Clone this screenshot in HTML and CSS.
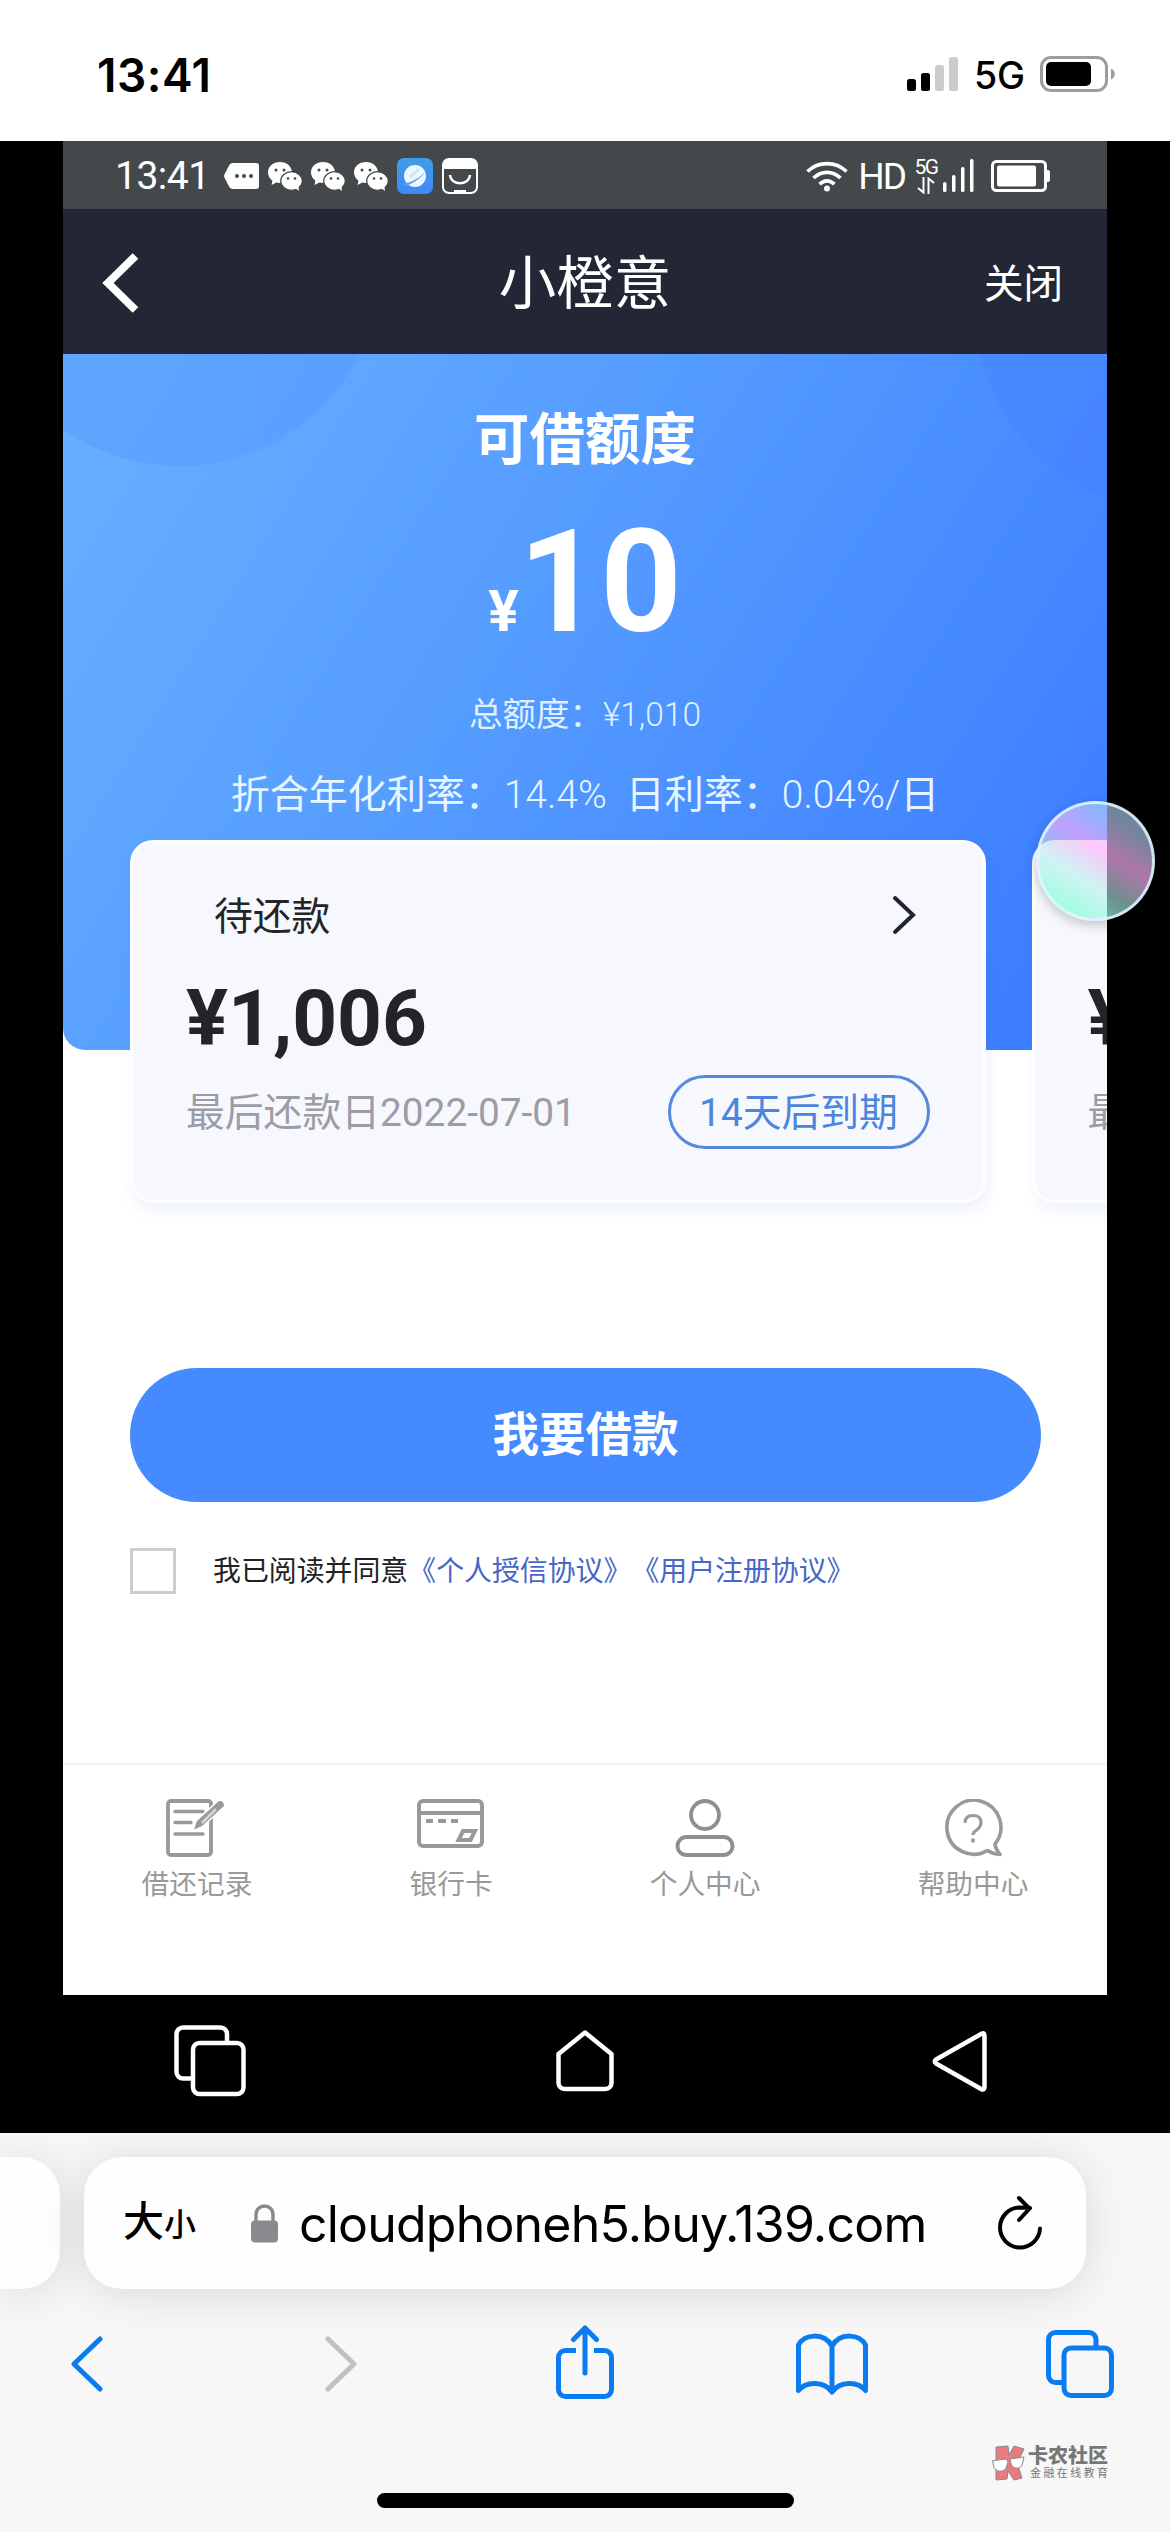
FILE: index.html
```html
<!DOCTYPE html>
<html lang="zh-CN">
<head>
<meta charset="utf-8">
<title>小橙意</title>
<link rel="stylesheet" href="styles.css">
</head>
<body>
<svg width="0" height="0" class="defs">
  <symbol id="wechat" viewBox="0 0 34 29">
    <path d="M12 0C5 0 0 4.600 0 10.500c0 3.300 1.700 6.100 4.400 8L3.600 23l4.700-2.500c1.200.3 2.400.5 3.700.5 6.800 0 12-4.700 12-10.500S19 0 12 0z" fill="#fff"/>
    <ellipse cx="23.500" cy="19" rx="10.800" ry="9.300" fill="#fff" stroke="#43484b" stroke-width="1.200"/>
    <path d="M27 26l4 3-.6-5z" fill="#fff"/>
    <g fill="#43484b"><circle cx="8" cy="8" r="1.500"/><circle cx="16" cy="8" r="1.500"/><circle cx="20" cy="16.500" r="1.300"/><circle cx="27" cy="16.500" r="1.300"/></g>
  </symbol>
</svg>

<header class="ios-status">
  <span class="ios-time">13:41</span>
  <div class="ios-right">
    <svg width="52" height="35" viewBox="0 0 52 35">
      <rect x="0" y="22" width="9" height="12" rx="2.500"/><rect x="14" y="16" width="9" height="18" rx="2.500"/>
      <g fill="#cbcbcb"><rect x="28" y="8" width="9" height="26" rx="2.500"/><rect x="42" y="0" width="9" height="34" rx="2.500"/></g>
    </svg>
    <span class="ios-net">5G</span>
    <svg width="76" height="36" viewBox="0 0 76 36">
      <rect x="1.500" y="1.500" width="65" height="33" rx="9.500" fill="none" stroke="#9d9d9d" stroke-width="3"/>
      <rect x="6" y="6" width="45" height="24" rx="5"/>
      <path d="M71 12.500c5 2 5 9 0 11z" fill="#9d9d9d"/>
    </svg>
  </div>
</header>

<main class="stage">
  <section class="screen">
    <div class="droid-status">
      <span class="droid-time">13:41</span>
      <div class="notices">
        <svg width="35" height="28" viewBox="0 0 35 28"><path d="M9 1h23a3 3 0 0 1 3 3v20a3 3 0 0 1-3 3H9c-2 0-3-1-4-2.500L.7 16a4 4 0 0 1 0-4L5 3.500C6 2 7 1 9 1z" fill="#fff"/><g fill="#43484b"><circle cx="13" cy="14" r="2"/><circle cx="20" cy="14" r="2"/><circle cx="27" cy="14" r="2"/></g></svg>
        <svg width="34" height="29"><use href="#wechat"/></svg>
        <svg width="34" height="29"><use href="#wechat"/></svg>
        <svg width="34" height="29"><use href="#wechat"/></svg>
        <svg width="36" height="36" viewBox="0 0 36 36"><defs><linearGradient id="app" x2="0" y2="1"><stop stop-color="#3f9de6"/><stop offset="1" stop-color="#4187fb"/></linearGradient></defs><rect width="36" height="36" rx="7" fill="url(#app)"/><circle cx="18" cy="18" r="11" fill="#eef7ff"/><path d="M7 28c5 0 17-7 22-15-5 6-15 12-21 12z" fill="#5aa2f2"/><path d="M13 19l9-8" stroke="#c9e4ff" stroke-width="3"/></svg>
        <svg width="36" height="36" viewBox="0 0 36 36"><rect x="1" y="1" width="34" height="34" rx="6" fill="none" stroke="#fff" stroke-width="2"/><path d="M1 11V7a6 6 0 0 1 6-6h22a6 6 0 0 1 6 6v4z" fill="#fff"/><path d="M8 17c1 11 19 11 20 0" fill="none" stroke="#fff" stroke-width="2.500"/><path d="M12 33.500h12" stroke="#fff" stroke-width="3"/></svg>
      </div>
      <div class="droid-right">
        <svg width="42" height="31" viewBox="0 0 42 31" fill="none" stroke="#fff" stroke-width="3.600"><path d="M1.500 10.500c11-10.500 28-10.500 39 0M7.500 17c8-7.500 19-7.500 27 0M13.500 23.200c5-4.500 10-4.500 15 0"/><circle cx="21" cy="27.500" r="3" fill="#fff" stroke="none"/></svg>
        <span class="hd">HD</span>
        <div class="net">
          <span>5G</span>
          <svg width="18" height="17" viewBox="0 0 18 17" fill="none" stroke="#fff" stroke-width="2"><path d="M6.500 0v15.500L1 11M11.500 17V1.500L17 6"/></svg>
        </div>
        <svg class="bars" width="31" height="34" viewBox="0 0 31 34" fill="#fff"><rect x="0" y="23" width="3.500" height="10" rx="1.500"/><rect x="9" y="16" width="3.500" height="17" rx="1.500"/><rect x="18" y="8" width="3.500" height="25" rx="1.500"/><rect x="27" y="0" width="3.500" height="33" rx="1.500"/></svg>
        <svg width="60" height="32" viewBox="0 0 60 32"><rect x="1.500" y="1.500" width="53" height="29" rx="4" fill="none" stroke="#fff" stroke-width="3"/><rect x="6" y="5.500" width="39" height="21" rx="2" fill="#fff"/><path d="M55 10h2a2 2 0 0 1 2 2v8a2 2 0 0 1-2 2h-2z" fill="#fff"/></svg>
      </div>
    </div>

    <nav class="titlebar">
      <svg width="38" height="60" viewBox="0 0 38 60" fill="none" stroke="#fff" stroke-width="8"><path d="M33.500 3L6 30l27.500 27"/></svg>
      <h1>小橙意</h1>
      <span class="close">关闭</span>
    </nav>

    <section class="hero">
      <h2>可借额度</h2>
      <div class="limit"><span class="yen">¥</span>10</div>
      <p class="total">总额度：<span>¥1,010</span></p>
      <p class="rate">折合年化利率：<span>14.4%&nbsp; </span>日利率：<span>0.04%/</span>日</p>
    </section>

    <section class="bills">
      <article class="bill">
        <div class="bill-head">
          <span>待还款</span>
          <svg width="24" height="40" viewBox="0 0 24 40" fill="none" stroke="#222330" stroke-width="4" stroke-linecap="round"><path d="M3 3l18 17L3 37"/></svg>
        </div>
        <strong>¥1,006</strong>
        <div class="bill-foot"><span>最后还款日2022-07-01</span><em>14天后到期</em></div>
      </article>
      <article class="bill">
        <div class="bill-head"></div>
        <strong>¥</strong>
        <div class="bill-foot"><span>最</span></div>
      </article>
    </section>

    <button class="borrow">我要借款</button>

    <label class="agree"><i class="box"></i><span>我已阅读并同意<b>《个人授信协议》《用户注册协议》</b></span></label>

    <nav class="tabs">
      <a><svg width="62" height="58" viewBox="0 0 62 58" fill="none" stroke="#999" stroke-width="3.800"><rect x="2" y="2" width="43" height="54" rx="3"/><path d="M9 12.500h28M9 23.500h16M9 35h28" stroke-linecap="round" stroke-width="3.400"/><path d="M53 1q5 0 6 6L36 28l-9 4 3-10z" fill="#999" stroke="#fff" stroke-width="1.500"/><path d="M50 10L36 24" stroke="#d5d5d5" stroke-width="2.500"/></svg>借还记录</a>
      <a><svg width="68" height="58" viewBox="0 0 68 58" fill="none" stroke="#999" stroke-width="4"><rect x="2" y="2" width="63" height="45" rx="4"/><path d="M2 14h63"/><path d="M9 22h7M21 22h8M34 22h7" stroke-width="3.800"/><path d="M46 32h12l-4.500 9h-12z"/></svg>银行卡</a>
      <a><svg width="60" height="58" viewBox="0 0 60 58" fill="none" stroke="#8f8f8f" stroke-width="3.800"><circle cx="30" cy="16" r="14"/><rect x="2.500" y="38" width="55" height="18" rx="9"/></svg>个人中心</a>
      <a><svg width="60" height="58" viewBox="0 0 60 58" fill="none" stroke="#999" stroke-width="3.600"><path d="M44.500 51.500A27 27 0 1 1 52 45q.5 5 5 10.500-7-.5-12.500-4z" stroke-linejoin="round"/><path d="M22 24q0-7.500 8-7.500t8 7q0 4.500-5 8-3 2-3 4.500" stroke-width="3.200"/><path d="M30 39.500v4"/></svg>帮助中心</a>
    </nav>
  </section>

  <div class="droid-nav">
    <svg width="72" height="72" viewBox="0 0 72 72"><path d="M53 17V9a6.500 6.500 0 0 0-6.500-6.500H9A6.500 6.500 0 0 0 2.500 9v38A6.500 6.500 0 0 0 9 53.500h9"/><rect x="19" y="18" width="50.500" height="51" rx="6.500"/></svg>
    <svg width="58" height="62" viewBox="0 0 58 62"><path d="M2.500 24L29 2.500 55.500 24v29a6 6 0 0 1-6 6h-41a6 6 0 0 1-6-6z"/></svg>
    <svg width="56" height="62" viewBox="0 0 56 62"><path d="M50 3.500L4 29.500q-2.500 2 0 4L50 59.500q2.500.5 2.500-3v-50q0-4-2.500-3z"/></svg>
  </div>
  <div class="ball"></div>
</main>

<footer class="safari">
  <div class="address">
    <div class="prev-tab"></div>
    <div class="field">
      <span class="size">大<small>小</small></span>
      <svg class="lock" width="27" height="39" viewBox="0 0 27 39"><path d="M5 18v-7c0-12 17-12 17 0v7" fill="none" stroke="#8a898e" stroke-width="3.400"/><rect y="16.500" width="27" height="22" rx="4" fill="#8a898e"/></svg>
      <span class="url">cloudphoneh5.buy.139.com</span>
      <svg class="reload" width="46" height="56" viewBox="0 0 46 56" fill="none" stroke="#000" stroke-width="4" stroke-linecap="round"><path d="M43 33.500a20 20 0 1 1-20-21l10 .5M22 3l10.500 10.500L22 25"/></svg>
    </div>
  </div>
  <div class="toolbar">
    <svg class="back" width="32" height="56" viewBox="0 0 32 56"><path d="M29 3L3 28l26 25"/></svg>
    <svg class="off" width="32" height="56" viewBox="0 0 32 56"><path d="M3 3l26 25L3 53"/></svg>
    <svg width="58" height="74" viewBox="0 0 58 74"><path d="M20 25.500H9.500A7 7 0 0 0 2.500 32.500v32a7 7 0 0 0 7 7h39a7 7 0 0 0 7-7v-32a7 7 0 0 0-7-7H38" stroke-linecap="butt"/><path d="M29 48V3M17.500 14.500L29 3l11.500 11.500"/></svg>
    <svg width="72" height="62" viewBox="0 0 72 62"><path d="M36 13C28-1 8 1 2.500 12v45.500C10 48 28 48 36 59c8-11 26-11 33.500-1.500V12C64 1 44-1 36 13zv46"/></svg>
    <svg width="68" height="68" viewBox="0 0 68 68"><path d="M50 17V9.500a7 7 0 0 0-7-7H9.500a7 7 0 0 0-7 7v36a7 7 0 0 0 7 7H17"/><rect x="18" y="18" width="47.500" height="47.500" rx="7"/></svg>
  </div>
  <div class="watermark">
    <svg width="34" height="36" viewBox="0 0 34 36" stroke="#888" stroke-width="1"><path d="M5 2l12-1 1 9 5-9 10 3-7 14 5 15-8 2-6-9-1 8-11 1z" fill="#ea7b82"/><path d="M1 16l12-2q4 0 4 3l-2 6q-2 4-8 3-5-2-5-9zM19 14l14-2-2 8q-2 4-7 3-4-1-5-9z" fill="#fff"/></svg>
    <div><b>卡农社区</b><span>金融在线教育</span></div>
  </div>
  <div class="home-bar"></div>
</footer>
</body>
</html>
```
FILE: styles.css
```css
* { box-sizing: border-box; margin: 0; padding: 0; }
body { width: 1170px; height: 2532px; overflow: hidden; background: #fff; font-family: Roboto, "Noto Sans CJK SC", sans-serif; }
svg { display: block; flex: none; }
.defs { position: absolute; }

.ios-status { height: 141px; display: flex; justify-content: space-between; padding: 55px 54px 0 97px; font-family: Inter, sans-serif; }
.ios-time { font-size: 46px; font-weight: 600; line-height: 40px; letter-spacing: .5px; }
.ios-right { display: flex; align-items: flex-start; }
.ios-right svg { margin-top: 1px; }
.ios-right svg:first-child { margin-top: 2px; }
.ios-net { width: 81px; text-align: center; font-size: 37.500px; font-weight: 500; line-height: 41px; }

.stage { position: relative; height: 1992px; background: #000; }
.screen { width: 1044px; height: 1854px; margin: 0 63px; background: #fff; overflow: hidden; display: flex; flex-direction: column; }

.droid-status { height: 68px; background: #43484b; color: #fff; display: flex; align-items: center; padding: 2px 56px 0 52px; }
.droid-time { width: 109px; font-size: 39px; line-height: 60px; letter-spacing: -.5px; }
.notices { display: flex; align-items: center; gap: 9px; flex: 1; }
.droid-right { display: flex; align-items: center; }
.hd { font-size: 37px; margin: 0 9px 0 10px; letter-spacing: -2px; }
.net { display: flex; flex-direction: column; align-items: center; width: 24px; gap: 1px; margin-right: 5px; }
.net span { font-size: 21px; line-height: 17px; letter-spacing: -1.500px; }
.bars { margin-right: 17px; }

.titlebar { height: 145px; background: #232735; color: #fff; display: grid; grid-template-columns: 1fr auto 1fr; align-items: center; padding: 2px 44px 0 39px; }
.titlebar h1 { font-size: 57.500px; font-weight: 400; line-height: 80px; margin-left: 5px; padding-top: 5px; }
.close { justify-self: end; font-size: 39.500px; padding-bottom: 5px; }

.hero { height: 696px; flex: none; padding-top: 47px; text-align: center; color: #fff; border-radius: 0 0 22px 22px;
  background: radial-gradient(circle at 116px -90px, rgba(85,150,255,.42) 201px, transparent 203px),
    radial-gradient(circle at 1114px -47px, rgba(70,125,255,.32) 202px, transparent 204px),
    linear-gradient(122deg, #68b1ff 0%, #559cff 42%, #3c7dff 94%); }
.hero h2 { font-size: 55.500px; line-height: 80px; }
.limit { margin-top: 32px; height: 140px; font-size: 142px; font-weight: 700; line-height: 140px; }
.yen { font-size: 57px; line-height: 1; }
.total { margin-top: 37px; font-size: 33.500px; line-height: 50px; color: #dff1ff; }
.rate { margin-top: 30px; font-size: 39px; line-height: 50px; color: #e6f5ff; }
.total span, .rate span { font-weight: 300; }

.bills { display: flex; gap: 46px; margin: -210px 0 0 67px; }
.bill { flex: none; width: 855.500px; height: 363px; padding: 37px 53px 0 53px; border: 3px solid #fdfeff; border-radius: 23px; background: #f7f8fd; box-shadow: 3px 8px 14px rgba(90,110,230,.09); color: #222427; }
.bill-head { height: 66px; display: flex; align-items: center; justify-content: space-between; padding: 0 14px 0 28px; font-size: 38.800px; }
.bill-head svg { margin-top: 4px; }
.bill strong { display: block; margin-top: 32px; font-size: 78.300px; line-height: 80px; }
.bill-foot { display: flex; align-items: center; justify-content: space-between; height: 74px; margin-top: 17px; font-size: 38.800px; color: #9c9ca6; white-space: nowrap; }
.bill-foot span { padding-bottom: 6px; }
.bill-foot em { width: 262px; height: 74px; border: 3px solid #5789da; border-radius: 37px; text-align: center; line-height: 69px; font-style: normal; color: #4b86dc; }

.borrow { flex: none; width: 911px; height: 134px; margin: 165px 0 0 67px; border: 0; border-radius: 67px; background: #458aff; color: #fff; font: 700 46.500px/132px Roboto, "Noto Sans CJK SC", sans-serif; }
.agree { display: flex; align-items: center; height: 46px; margin: 46px 0 0 67px; font-size: 27.900px; color: #222; white-space: nowrap; text-spacing-trim: space-all; }
.agree span { padding-bottom: 5px; }
.box { width: 46px; height: 46px; border: 3px solid #ccc; margin-right: 37px; }
.agree b { font-weight: 400; color: #4767c8; }

.tabs { height: 232px; margin-top: auto; border-top: 2px solid #f3f3f3; display: flex; justify-content: space-around; padding-top: 34px; font-size: 27.700px; line-height: 40px; color: #999; }
.tabs a { display: flex; flex-direction: column; align-items: center; gap: 8px; }

.droid-nav { height: 138px; display: grid; grid-template-columns: repeat(3, 375px); justify-content: center; justify-items: center; align-items: center; padding-bottom: 6px; }
.droid-nav svg { fill: none; stroke: #fff; stroke-width: 4.500; stroke-linejoin: round; }

.ball { position: absolute; left: 1036px; top: 660px; width: 119px; height: 120px; border-radius: 50%; border: 3px solid rgba(225,245,255,.85); box-shadow: 0 4px 12px rgba(0,0,0,.22);
  background: linear-gradient(32deg, rgba(135,255,215,.85) 8%, rgba(180,240,235,.6) 36%, rgba(255,175,250,.68) 58%, rgba(185,215,255,.62) 80%, rgba(155,220,235,.62) 100%); }

.safari { height: 399px; background: #f7f7f7; overflow: hidden; display: flex; flex-direction: column; }
.address { display: flex; gap: 24px; padding-top: 24px; }
.prev-tab, .field { height: 132px; background: #fefefe; box-shadow: 0 4px 46px rgba(0,0,0,.12); }
.prev-tab { width: 60px; border-radius: 0 38px 38px 0; }
.field { width: 1002px; border-radius: 38px; display: flex; align-items: center; padding-left: 39px; font-family: Inter, "Noto Sans CJK SC", sans-serif; }
.size { width: 128px; font-size: 41px; font-weight: 500; line-height: 60px; white-space: nowrap; }
.size small { font-size: 32px; }
.url { width: 698px; margin-left: 21px; padding-top: 2px; font-size: 50px; line-height: 60px; letter-spacing: -.8px; white-space: nowrap; }
.toolbar { display: grid; grid-template-columns: repeat(5, 248px); justify-content: center; justify-items: center; align-items: center; height: 74px; margin-top: 36px; }
.toolbar svg { fill: none; stroke: #0b7bf0; stroke-width: 5; stroke-linecap: round; stroke-linejoin: round; }
.toolbar .back { margin: 4px 5px 0 0; }
.toolbar .off { stroke: #c1c1c1; margin: 4px 0 0 8px; }
.toolbar svg:nth-child(n+4) { margin: 4px 2px 0 0; }
.watermark { display: flex; gap: 3px; margin: 46px 0 0 991px; color: #777; }
.watermark div { display: flex; flex-direction: column; }
.watermark b { font-size: 20px; line-height: 22px; font-weight: 900; white-space: nowrap; }
.watermark span { font-size: 11px; line-height: 14px; letter-spacing: 2.400px; padding-left: 2px; white-space: nowrap; }
.home-bar { width: 417px; height: 15px; margin: 12px auto 0; border-radius: 8px; background: #000; }
```
